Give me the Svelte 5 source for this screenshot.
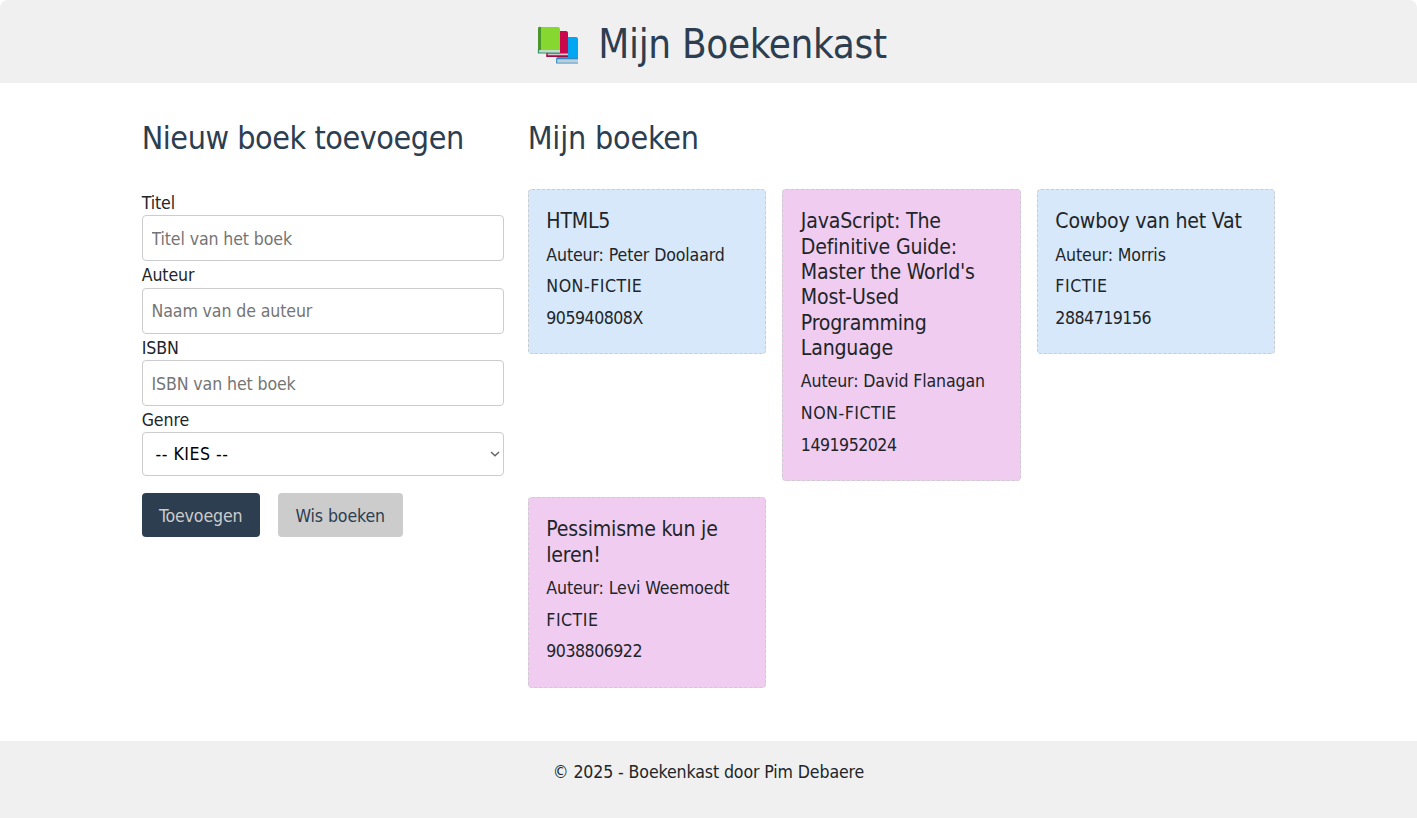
<script>
  const books = [
    { title: 'HTML5', author: 'Peter Doolaard', genre: 'NON-FICTIE', isbn: '905940808X' },
    { title: "JavaScript: The Definitive Guide: Master the World's Most-Used Programming Language", author: 'David Flanagan', genre: 'NON-FICTIE', isbn: '1491952024' },
    { title: 'Cowboy van het Vat', author: 'Morris', genre: 'FICTIE', isbn: '2884719156' },
    { title: 'Pessimisme kun je leren!', author: 'Levi Weemoedt', genre: 'FICTIE', isbn: '9038806922' }
  ];
</script>

<div class="page">
  <header>
    <svg class="logo" viewBox="0 0 42 40" aria-hidden="true">
      <path d="M19 12h20a2 2 0 0 1 2 2v23H20z" fill="#03a6f0" />
      <path d="M20 34h21v3H20z" fill="#b9cfdb" />
      <path d="M19.7 33v5H41M20 33.6h21" fill="none" stroke="#3187bf" stroke-width="1.1" />
      <path d="M10 6h19a2 2 0 0 1 2 2v23H10z" fill="#c9094c" />
      <path d="M10 28.5h21v2H10z" fill="#d9c3cc" />
      <path d="M10 28v3.3h21" fill="none" stroke="#a00c40" stroke-width="1.5" />
      <path d="M1 4a2 2 0 0 1 2-2h18a2 2 0 0 1 2 2v24H1z" fill="#86d72f" />
      <path d="M1 4a2 2 0 0 1 3-2v23H1z" fill="#4a962c" />
      <path d="M2 25h21v3H2z" fill="#c5d8d0" />
      <path d="M1.5 24v4H23" fill="none" stroke="#329269" stroke-width="1.2" />
    </svg>
    <h1>Mijn Boekenkast</h1>
  </header>
  <main>
    <section>
      <h2 class="form-title">Nieuw boek toevoegen</h2>
      <form onsubmit={(e) => e.preventDefault()}>
        <label for="title">Titel</label>
        <input id="title" placeholder="Titel van het boek" />
        <label for="author">Auteur</label>
        <input id="author" placeholder="Naam van de auteur" />
        <label for="isbn">ISBN</label>
        <input id="isbn" placeholder="ISBN van het boek" />
        <label for="genre">Genre</label>
        <div class="select">
          <select id="genre">
            <option>-- KIES --</option>
            <option>FICTIE</option>
            <option>NON-FICTIE</option>
          </select>
          <svg viewBox="0 0 10 6" aria-hidden="true"><path d="M1 1l4 3.8L9 1" /></svg>
        </div>
        <div class="actions">
          <button class="primary">Toevoegen</button>
          <button type="button" class="clear">Wis boeken</button>
        </div>
      </form>
    </section>
    <section>
      <h2>Mijn boeken</h2>
      <div class="books">
        {#each books as book, i}
          <article class:pink={i % 2 === 1}>
            <h3>{book.title}</h3>
            <p>Auteur: {book.author}</p>
            <p class="genre">{book.genre}</p>
            <p class="isbn">{book.isbn}</p>
          </article>
        {/each}
      </div>
    </section>
  </main>
  <footer>© 2025 - Boekenkast door Pim Debaere</footer>
</div>

<style>
  :global(body) { margin: 0; background: #fff; }
  * { box-sizing: border-box; }
  .page {
    min-height: 818px;
    display: flex;
    flex-direction: column;
    font-family: Tahoma, "DejaVu Sans Condensed", "DejaVu Sans", sans-serif;
    font-stretch: condensed;
    font-size: 17.6px;
    line-height: 1.5;
    letter-spacing: -0.12px;
    color: #212529;
  }
  header {
    height: 83px;
    padding: 5px 0 0 7px;
    background: #f0f0f0;
    border-radius: 8px 8px 0 0;
    display: flex;
    justify-content: center;
    align-items: center;
    gap: 19px;
    color: #2c3e50;
  }
  .logo { width: 42px; height: 40px; margin-top: 2px; }
  h1, h2, h3, p { margin: 0; font-weight: 400; }
  h1 { font-size: 40px; line-height: 48px; letter-spacing: -0.35px; }
  h2 {
    height: 38px;
    margin-bottom: 32px;
    font-size: 32px;
    line-height: 38px;
    letter-spacing: -0.2px;
    white-space: nowrap;
    color: #2c3e50;
  }
  .form-title { letter-spacing: -0.44px; }
  main {
    flex: 1;
    width: 80%;
    margin: 0 auto;
    padding-top: 36px;
    display: grid;
    grid-template-columns: 362px 1fr;
    gap: 24px;
  }
  label { display: block; height: 26.35px; padding-top: 0.9px; line-height: 26px; }
  input, select {
    display: block;
    width: 100%;
    height: 46px;
    border: 1px solid #ccc;
    border-radius: 4px;
    padding: 1px 8.8px 0;
    font: inherit;
    letter-spacing: inherit;
    background: #fff;
    color: #000;
  }
  input::placeholder { color: #757575; }
  .select { position: relative; }
  .select svg {
    position: absolute;
    right: 4px;
    top: 19px;
    width: 10px;
    height: 6px;
    fill: none;
    stroke: #666;
    stroke-width: 1.5;
    pointer-events: none;
  }
  select { appearance: none; height: 44px; padding: 0 12.8px; letter-spacing: 0.5px; }
  .actions { display: flex; gap: 18px; margin-top: 17px; }
  button {
    height: 44px;
    padding: 2px 0 0;
    border: 0;
    border-radius: 4px;
    font: inherit;
    letter-spacing: inherit;
    white-space: nowrap;
  }
  .primary { width: 118px; background: #2c3e50; color: #ccc; }
  .clear { width: 125px; background: #ccc; color: #2c3e50; }
  .books { display: grid; grid-template-columns: repeat(3, minmax(0, 1fr)); gap: 16px; align-items: start; }
  article {
    padding: 18.4px 17.6px 16.6px;
    border: 1px dashed #ccc;
    border-radius: 4px;
    background: #d7e8fa;
  }
  article.pink { background: #f0cdf0; }
  h3 { font-size: 21.12px; line-height: 1.2; margin-bottom: 8px; letter-spacing: -0.2px; }
  p { margin-bottom: 5.28px; }
  .genre { letter-spacing: 0.5px; }
  .isbn { letter-spacing: -0.5px; }
  footer { height: 77px; padding-top: 17.6px; background: #f0f0f0; text-align: center; }
</style>
